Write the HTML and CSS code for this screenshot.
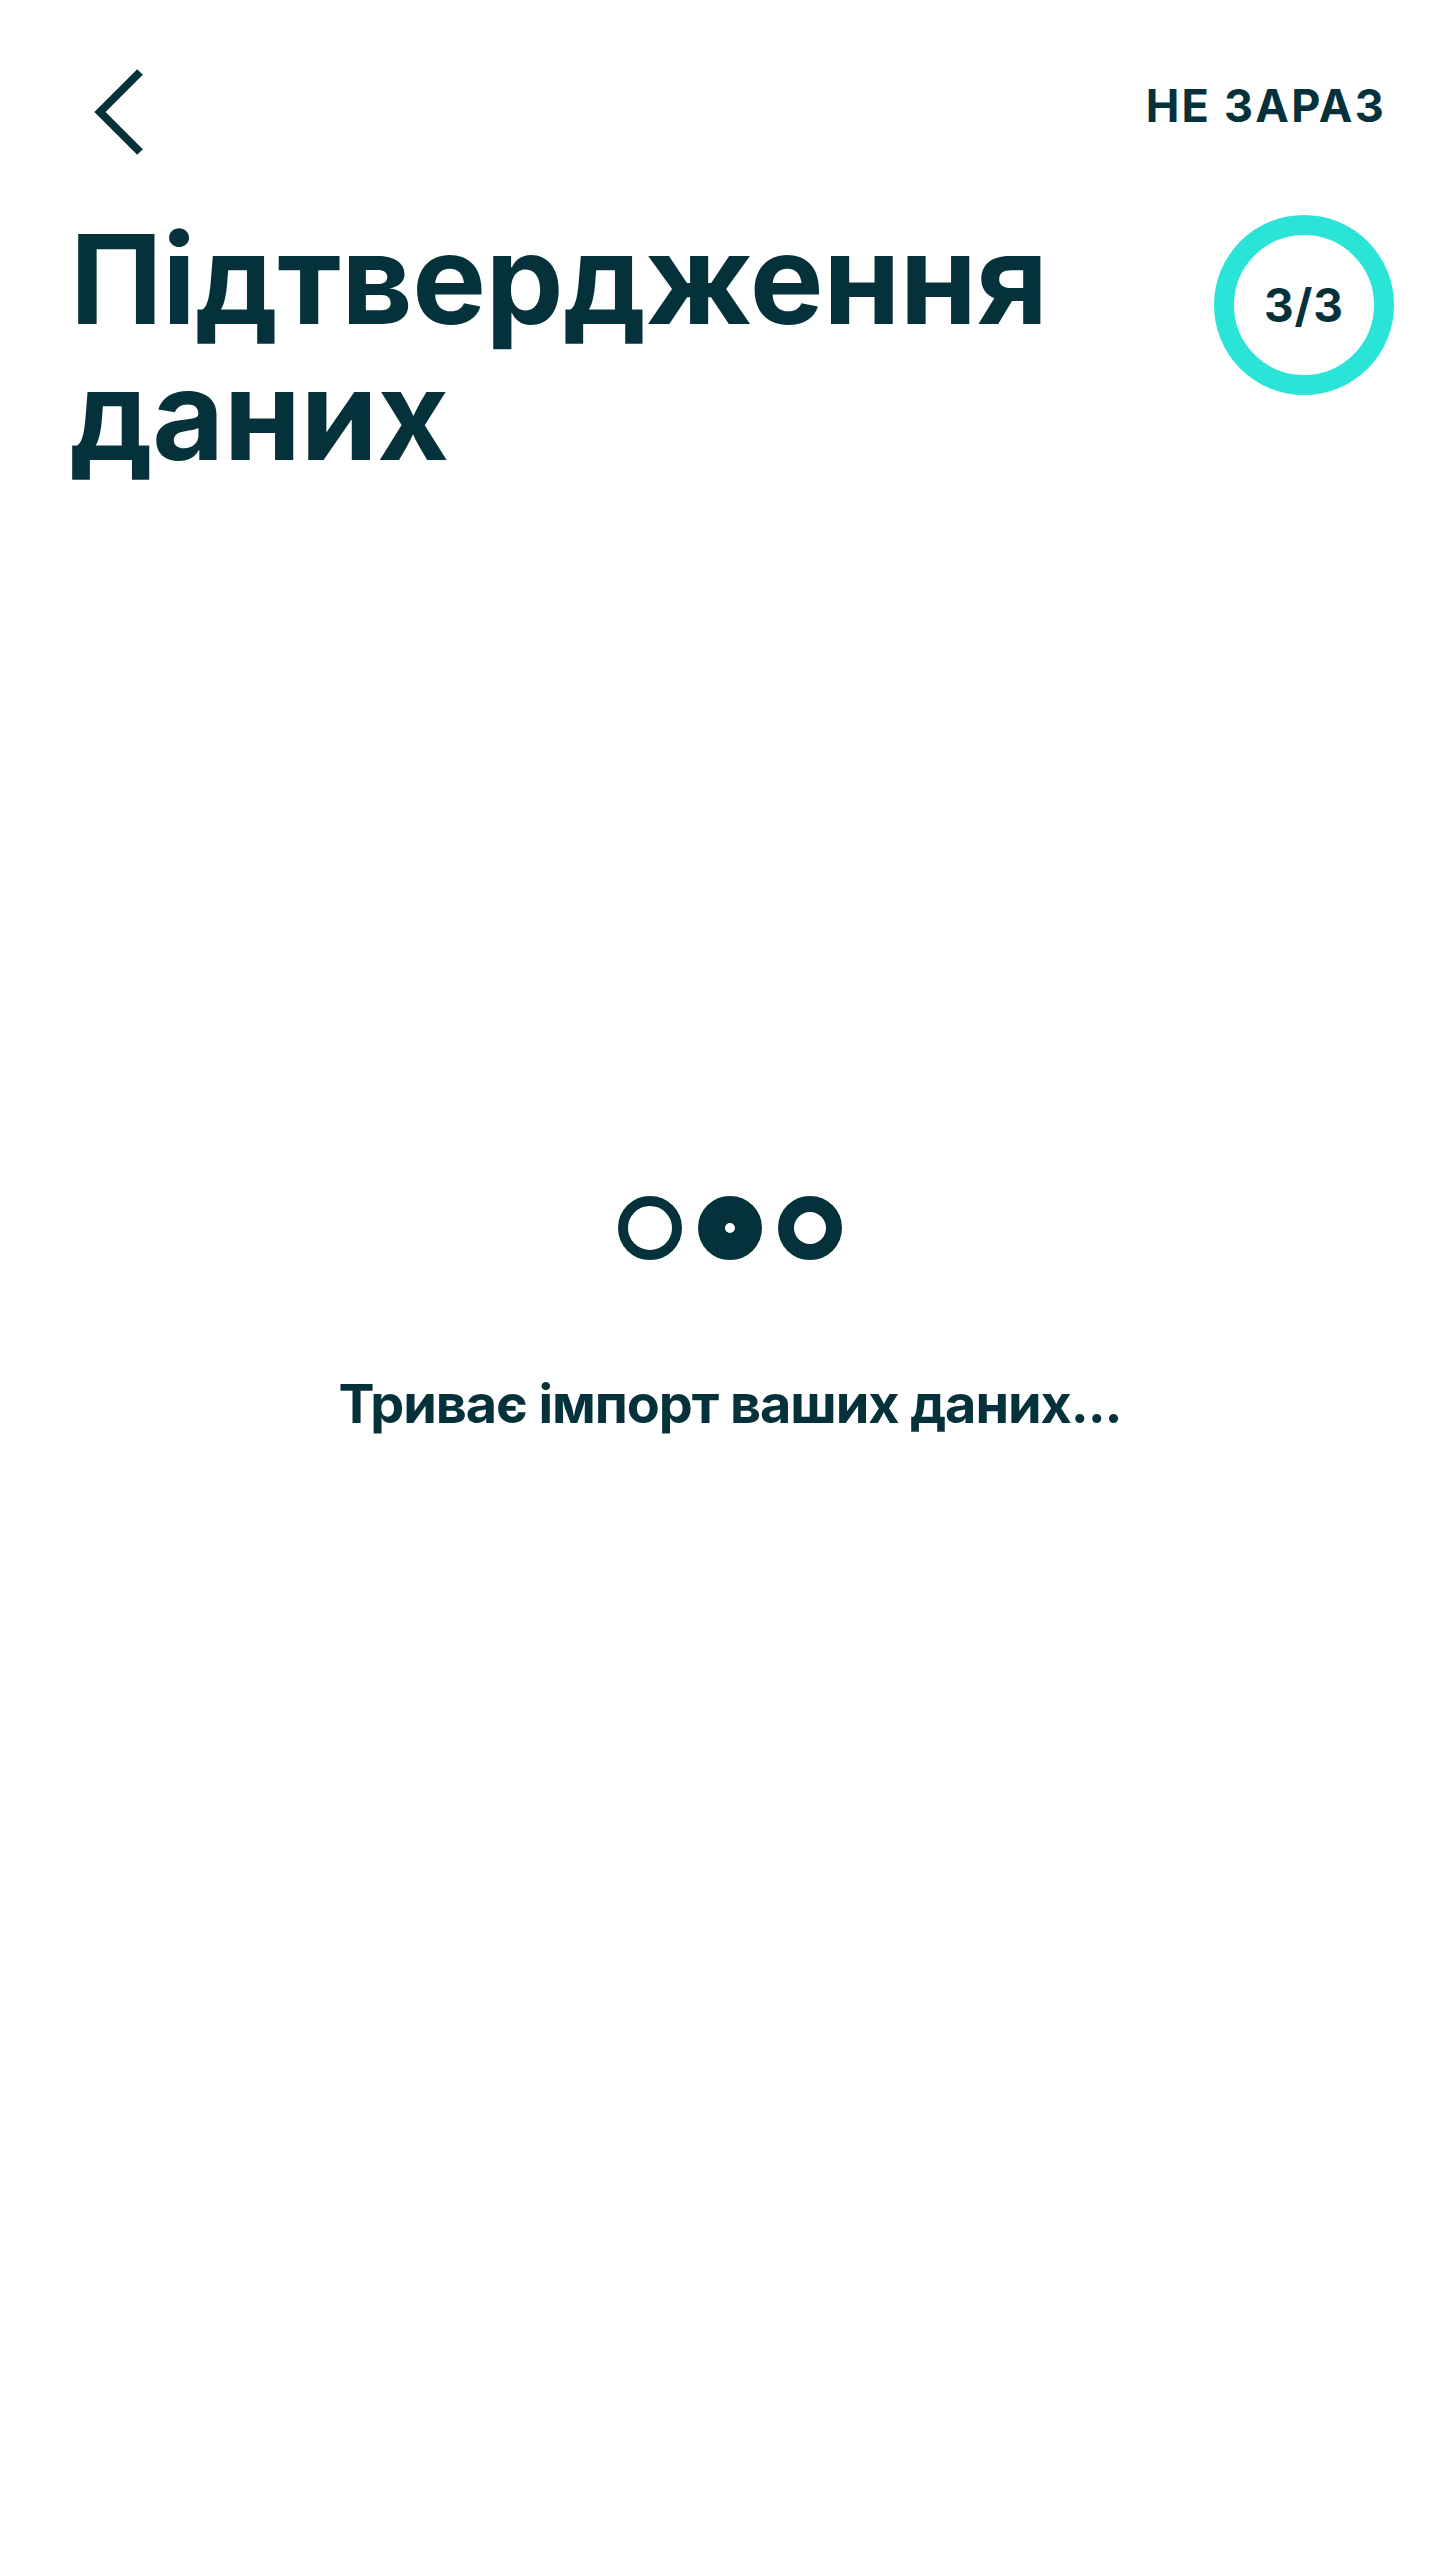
FILE: index.html
```html
<!DOCTYPE html>
<html lang="uk">
<head>
<meta charset="utf-8">
<title>Підтвердження даних</title>
<link rel="stylesheet" href="styles.css">
</head>
<body>
<div class="screen">
  <header class="topbar">
    <button class="back" aria-label="Назад">
      <svg width="56" height="92" viewBox="0 0 56 92">
        <polyline points="50,6 10,46 50,86" fill="none" stroke="#05323a" stroke-width="8" stroke-linejoin="miter"/>
      </svg>
    </button>
    <span class="skip">НЕ ЗАРАЗ</span>
  </header>
  <section class="title-row">
    <h1 class="title">Підтвердження<br>даних</h1>
    <div class="step"><span>3/3</span></div>
  </section>
  <section class="loader">
    <div class="dots">
      <span class="dot dot-1"></span>
      <span class="dot dot-2"></span>
      <span class="dot dot-3"></span>
    </div>
    <p class="status">Триває імпорт ваших даних...</p>
  </section>
</div>
</body>
</html>
```
FILE: styles.css
```css
html, body {
  margin: 0;
  padding: 0;
  background: #ffffff;
}
body {
  font-family: Inter, "Noto Sans", sans-serif;
  color: #05323a;
}
.screen {
  width: 1452px;
  min-height: 2560px;
}
.topbar {
  display: flex;
  justify-content: space-between;
  align-items: flex-start;
  padding: 66px 68px 0 90px;
}
.back {
  display: block;
  border: 0;
  padding: 0;
  margin: 0;
  background: none;
  width: 56px;
  height: 92px;
}
.back svg { display: block; }
.skip {
  margin-top: 13px;
  font-size: 45px;
  line-height: 54px;
  font-weight: 700;
  letter-spacing: 0.05em;
  margin-right: -2px;
}
.title-row {
  display: flex;
  justify-content: space-between;
  align-items: flex-start;
  margin-top: 53px;
  padding: 0 58px 0 70px;
}
.title {
  margin: 0;
  font-size: 124px;
  line-height: 136px;
  font-weight: 700;
  letter-spacing: -0.5px;
}
.step {
  margin-top: 4px;
  width: 180px;
  height: 180px;
  box-sizing: border-box;
  border: 20px solid #2be4d8;
  border-radius: 50%;
  display: flex;
  align-items: center;
  justify-content: center;
  font-size: 46px;
  font-weight: 700;
  letter-spacing: 0.02em;
}
.loader {
  display: flex;
  flex-direction: column;
  align-items: center;
  margin-top: 713px;
}
.dots {
  display: flex;
  gap: 16px;
  margin-left: 8px;
}
.dot {
  width: 64px;
  height: 64px;
  box-sizing: border-box;
  border-radius: 50%;
  border-style: solid;
  border-color: #05323a;
}
.dot-1 { border-width: 10px; }
.dot-2 { border-width: 27px; }
.dot-3 { border-width: 16px; }
.status {
  margin: 111px 0 0 8px;
  font-size: 54px;
  line-height: 66px;
  font-weight: 700;
  letter-spacing: -0.02em;
}
```
